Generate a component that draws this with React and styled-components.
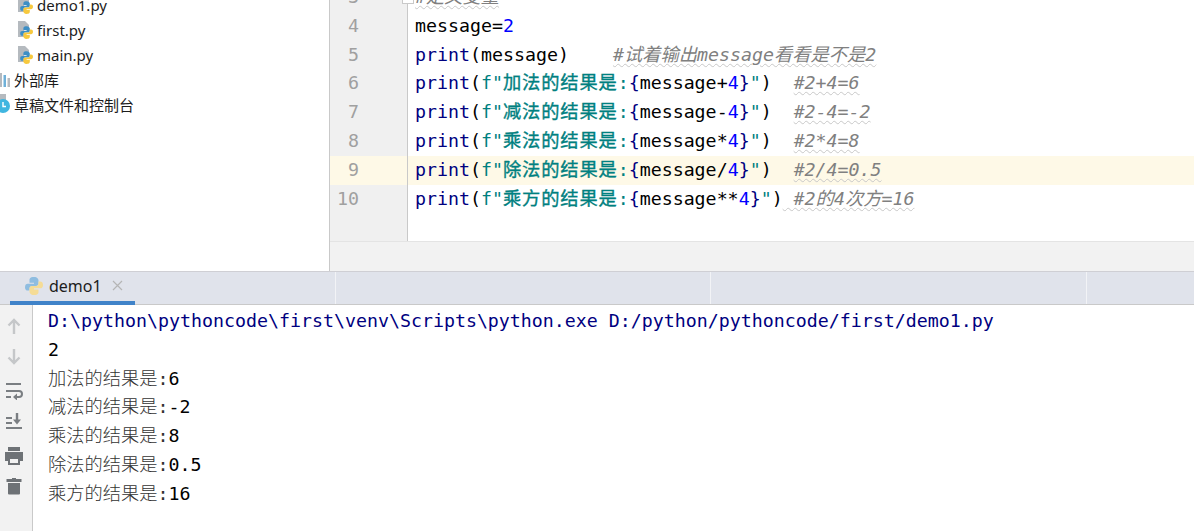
import styled, { createGlobalStyle } from 'styled-components';

const mono = '"DejaVu Sans Mono", "Noto Sans CJK SC", monospace';
const ui = '"Noto Sans", "Noto Sans CJK SC", sans-serif';

const GlobalStyle = createGlobalStyle`
  html, body {
    margin: 0;
    padding: 0;
    background: #fff;
  }
  body {
    width: 1194px;
    height: 531px;
    overflow: hidden;
  }
`;

const Page = styled.div`
  width: 1194px;
  height: 531px;
  display: flex;
  flex-direction: column;
  overflow: hidden;
  background: #fff;
`;

const TopArea = styled.div`
  display: flex;
  height: 271px;
  flex: none;
  overflow: hidden;
`;

const Sidebar = styled.div`
  width: 329px;
  flex: none;
  border-right: 1px solid #c9c9c9;
  font: 15px ${ui};
  color: #1c1c1c;
`;

const SidebarList = styled.div`
  display: flex;
  flex-direction: column;
  margin-top: -7px;
`;

const FileRow = styled.div`
  height: 24.7px;
  display: flex;
  align-items: center;
  gap: 4px;
  padding-left: 17px;
`;

const RootRow = styled.div`
  height: 24.7px;
  display: flex;
  align-items: center;
  gap: 4px;
`;

const EditorPane = styled.div`
  position: relative;
  flex: 1;
  display: flex;
  flex-direction: column;
  overflow: hidden;
`;

const FoldMarker = styled.div`
  position: absolute;
  left: 72px;
  top: -8px;
  width: 10px;
  height: 10px;
  background: #fff;
  border: 1px solid #c9c9c9;
`;

const Scroller = styled.div`
  height: 241px;
  flex: none;
  overflow: hidden;
  font: 18.27px/28.8px ${mono};
`;

const ScrollBody = styled.div`
  margin-top: -17px;
`;

const CodeRow = styled.div`
  display: flex;
  height: 28.8px;
  background: ${(p) => (p.$active ? '#fef9e7' : 'transparent')};
  color: #000;
  white-space: pre;
`;

const LineNo = styled.div`
  width: 78px;
  flex: none;
  box-sizing: border-box;
  padding-right: 48px;
  text-align: right;
  color: #a0a0a0;
  border-right: 1px solid #c9c9c9;
  background: ${(p) => (p.$active ? 'transparent' : '#f0f0f0')};
`;

const FillerRow = styled.div`
  display: flex;
  height: 80px;
`;

const CodeCell = styled.div`
  padding-left: 7px;
`;

const Fn = styled.span`
  color: #000080;
`;

const Num = styled.span`
  color: #0000ff;
`;

const Brace = styled.span`
  color: #000080;
`;

const Str = styled.span`
  color: #008080;
`;

const StrCjk = styled.span`
  letter-spacing: 0.84px;
  -webkit-text-stroke: 0.35px #008080;
`;

const Comment = styled.span`
  color: #808080;
  font-style: italic;
  text-decoration: underline wavy #c8c8c8 1px;
  text-underline-offset: 2px;
`;

const Gap = styled.span`
  display: inline-block;
  width: ${(p) => p.$w * 11}px;
`;

const EditorFooter = styled.div`
  flex: 1;
  background: #f2f2f2;
  border-top: 1px solid #e4e4e4;
`;

const TabBar = styled.div`
  height: 34px;
  flex: none;
  box-sizing: border-box;
  display: flex;
  background: #e0e3eb;
  border-top: 1px solid #cfcfd4;
  border-bottom: 1px solid #c9c9c9;
`;

const Tab = styled.div`
  margin-left: 10px;
  width: 125px;
  height: 33px;
  flex: none;
  box-sizing: border-box;
  display: flex;
  align-items: center;
  padding: 0 0 2px 15px;
  border-bottom: 4px solid #4083c9;
`;

const TabIcon = styled.svg`
  width: 18px;
  height: 18px;
  flex: none;
  margin-right: 6px;
`;

const TabTitle = styled.span`
  font: 16px ${ui};
  color: #1c1c1c;
  margin-right: 10px;
`;

const TabClose = styled.svg`
  width: 11px;
  height: 11px;
  flex: none;
`;

const TabCell = styled.div`
  width: ${(p) => p.$w}px;
  flex: none;
  box-sizing: border-box;
  border-right: 1px solid #f2f3f6;
`;

const ConsoleArea = styled.div`
  flex: 1;
  display: flex;
  min-height: 0;
`;

const ToolColumn = styled.div`
  width: 33px;
  flex: none;
  box-sizing: border-box;
  background: #f2f2f2;
  border-right: 1px solid #c9c9c9;
  display: flex;
  flex-direction: column;
  padding: 12px 0 0 5px;
`;

const ToolGroup = styled.div`
  display: flex;
  flex-direction: column;
  gap: ${(p) => p.$gap}px;
  margin-bottom: ${(p) => p.$after}px;
`;

const Output = styled.div`
  padding: 2px 0 0 15px;
  font: 18.27px/28.75px ${mono};
  white-space: pre;
`;

const OutLine = styled.div`
  color: ${(p) => (p.$path ? '#000080' : '#000')};
`;

const Faint = styled.span`
  color: #333;
  font-weight: 300;
`;

function PyIcon() {
  return (
    <svg width="16" height="18" viewBox="0 0 16 18">
      <path d="M1 0h7l4 4v4H7v8H1z" fill="#b5babf" />
      <g transform="translate(3.200 5.200) scale(.8)">
        <path d="M8 0C4 0 4 2 4 3v2h4v1H2.500C1 6 0 7 0 9s1 3 2.500 3H4v-2c0-1 1-2 2-2h4c1 0 2-1 2-2V3c0-1-1-3-4-3z" fill="#3d8fc6" />
        <path d="M8 16c4 0 4-2 4-3v-2H8v-1h5.500C15 10 16 9 16 7s-1-3-2.500-3H12v2c0 1-1 2-2 2H6c-1 0-2 1-2 2v3c0 1 1 3 4 3z" fill="#f7c93e" />
      </g>
    </svg>
  );
}

function ConsoleIcon({ kind }) {
  const paths = {
    up: <path d="M9 17V3M3.500 8.500L9 3l5.500 5.500" fill="none" stroke="#c5c7c9" strokeWidth="2.400" />,
    down: <path d="M9 1v14M3.500 9.500L9 15l5.500-5.500" fill="none" stroke="#c5c7c9" strokeWidth="2.400" />,
    wrap: (
      <>
        <path d="M1 2h15M1 9h13a3 3 0 0 1 0 6h-3M1 15h5" fill="none" stroke="#7a7e82" strokeWidth="2" />
        <path d="M12 11.500v7L8 15z" fill="#7a7e82" />
      </>
    ),
    scroll: (
      <>
        <path d="M1 16h16M1 6h6M1 11h6" fill="none" stroke="#7a7e82" strokeWidth="2" />
        <path d="M12 1v7" fill="none" stroke="#7a7e82" strokeWidth="2.400" />
        <path d="M8 7.500h8l-4 5z" fill="#7a7e82" />
      </>
    ),
    print: (
      <>
        <path d="M3 0h12v4H3zM0 5h18v9h-3v-4H3v4H0z" fill="#6e7276" />
        <path d="M4 11h10v6H4z" fill="none" stroke="#6e7276" strokeWidth="2" />
      </>
    ),
    trash: <path d="M7 1h4v1h5.500v3h-15V2H7zM3 6h12v10.500a1 1 0 0 1-1 1H4a1 1 0 0 1-1-1z" fill="#6e7276" />,
  };
  return (
    <svg width="18" height="18" viewBox="0 0 18 18">
      {paths[kind]}
    </svg>
  );
}

const treeFiles = ['demo1.py', 'first.py', 'main.py'];

const printLines = [
  { n: 6, label: '加法', tail: '+', comment: '#2+4=6', gap: 2 },
  { n: 7, label: '减法', tail: '-', comment: '#2-4=-2', gap: 2 },
  { n: 8, label: '乘法', tail: '*', comment: '#2*4=8', gap: 2 },
  { n: 9, label: '除法', tail: '/', comment: '#2/4=0.5', gap: 2, active: true },
  { n: 10, label: '乘方', tail: '**', comment: ' #2的4次方=16', gap: 0 },
];

const outputLines = [
  ['加法的结果是:', '6'],
  ['减法的结果是:', '-2'],
  ['乘法的结果是:', '8'],
  ['除法的结果是:', '0.5'],
  ['乘方的结果是:', '16'],
];

export default function App() {
  return (
    <Page>
      <GlobalStyle />
      <TopArea>
        <Sidebar>
          <SidebarList>
            {treeFiles.map((name) => (
              <FileRow key={name}>
                <PyIcon />
                <span>{name}</span>
              </FileRow>
            ))}
            <RootRow>
              <svg width="10" height="15" viewBox="0 0 10 15">
                <path d="M0 1h2v14H0z" fill="#b5babf" />
                <path d="M3.500 3H6v12H3.500z" fill="#6fb0d8" />
                <path d="M7.500 6H10v9H7.500z" fill="#b5babf" />
              </svg>
              <span>外部库</span>
            </RootRow>
            <RootRow>
              <svg width="10" height="20" viewBox="0 0 10 20">
                <path d="M0 0h6v6H0z" fill="#b5babf" />
                <circle cx="3" cy="12" r="7" fill="#40b6e0" />
                <path d="M3 8v4.500h3" fill="none" stroke="#fff" strokeWidth="1.400" />
              </svg>
              <span>草稿文件和控制台</span>
            </RootRow>
          </SidebarList>
        </Sidebar>
        <EditorPane>
          <Scroller>
            <ScrollBody>
              <CodeRow>
                <LineNo>3</LineNo>
                <CodeCell><Comment>#定义变量</Comment></CodeCell>
              </CodeRow>
              <CodeRow>
                <LineNo>4</LineNo>
                <CodeCell>message=<Num>2</Num></CodeCell>
              </CodeRow>
              <CodeRow>
                <LineNo>5</LineNo>
                <CodeCell>
                  <Fn>print</Fn>(message)<Gap $w={4} /><Comment>#试着输出message看看是不是2</Comment>
                </CodeCell>
              </CodeRow>
              {printLines.map((l) => (
                <CodeRow key={l.n} $active={l.active}>
                  <LineNo $active={l.active}>{l.n}</LineNo>
                  <CodeCell>
                    <Fn>print</Fn>(<Str>f"<StrCjk>{l.label}的结果是</StrCjk>:</Str>
                    <Brace>{'{'}</Brace>message{l.tail}<Num>4</Num><Brace>{'}'}</Brace>
                    <Str>"</Str>)<Gap $w={l.gap} /><Comment>{l.comment}</Comment>
                  </CodeCell>
                </CodeRow>
              ))}
              <FillerRow>
                <LineNo />
              </FillerRow>
            </ScrollBody>
          </Scroller>
          <EditorFooter />
          <FoldMarker />
        </EditorPane>
      </TopArea>
      <TabBar>
        <Tab>
          <TabIcon viewBox="0 0 16 16">
            <path d="M8 0C4 0 4 2 4 3v2h4v1H2.500C1 6 0 7 0 9s1 3 2.500 3H4v-2c0-1 1-2 2-2h4c1 0 2-1 2-2V3c0-1-1-3-4-3z" fill="#8fbde0" />
            <path d="M8 16c4 0 4-2 4-3v-2H8v-1h5.500C15 10 16 9 16 7s-1-3-2.500-3H12v2c0 1-1 2-2 2H6c-1 0-2 1-2 2v3c0 1 1 3 4 3z" fill="#f5dc96" />
          </TabIcon>
          <TabTitle>demo1</TabTitle>
          <TabClose viewBox="0 0 11 11">
            <path d="M1 1l9 9M10 1l-9 9" fill="none" stroke="#b5b5b5" strokeWidth="1.200" />
          </TabClose>
        </Tab>
        <TabCell $w={201} />
        <TabCell $w={375} />
        <TabCell $w={376} />
      </TabBar>
      <ConsoleArea>
        <ToolColumn>
          <ToolGroup $gap={13} $after={16}>
            <ConsoleIcon kind="up" />
            <ConsoleIcon kind="down" />
          </ToolGroup>
          <ToolGroup $gap={12} $after={17}>
            <ConsoleIcon kind="wrap" />
            <ConsoleIcon kind="scroll" />
          </ToolGroup>
          <ToolGroup $gap={12} $after={0}>
            <ConsoleIcon kind="print" />
            <ConsoleIcon kind="trash" />
          </ToolGroup>
        </ToolColumn>
        <Output>
          <OutLine $path>D:\python\pythoncode\first\venv\Scripts\python.exe D:/python/pythoncode/first/demo1.py</OutLine>
          <OutLine>2</OutLine>
          {outputLines.map(([label, value]) => (
            <OutLine key={label}>
              <Faint>{label}</Faint>
              {value}
            </OutLine>
          ))}
        </Output>
      </ConsoleArea>
    </Page>
  );
}
